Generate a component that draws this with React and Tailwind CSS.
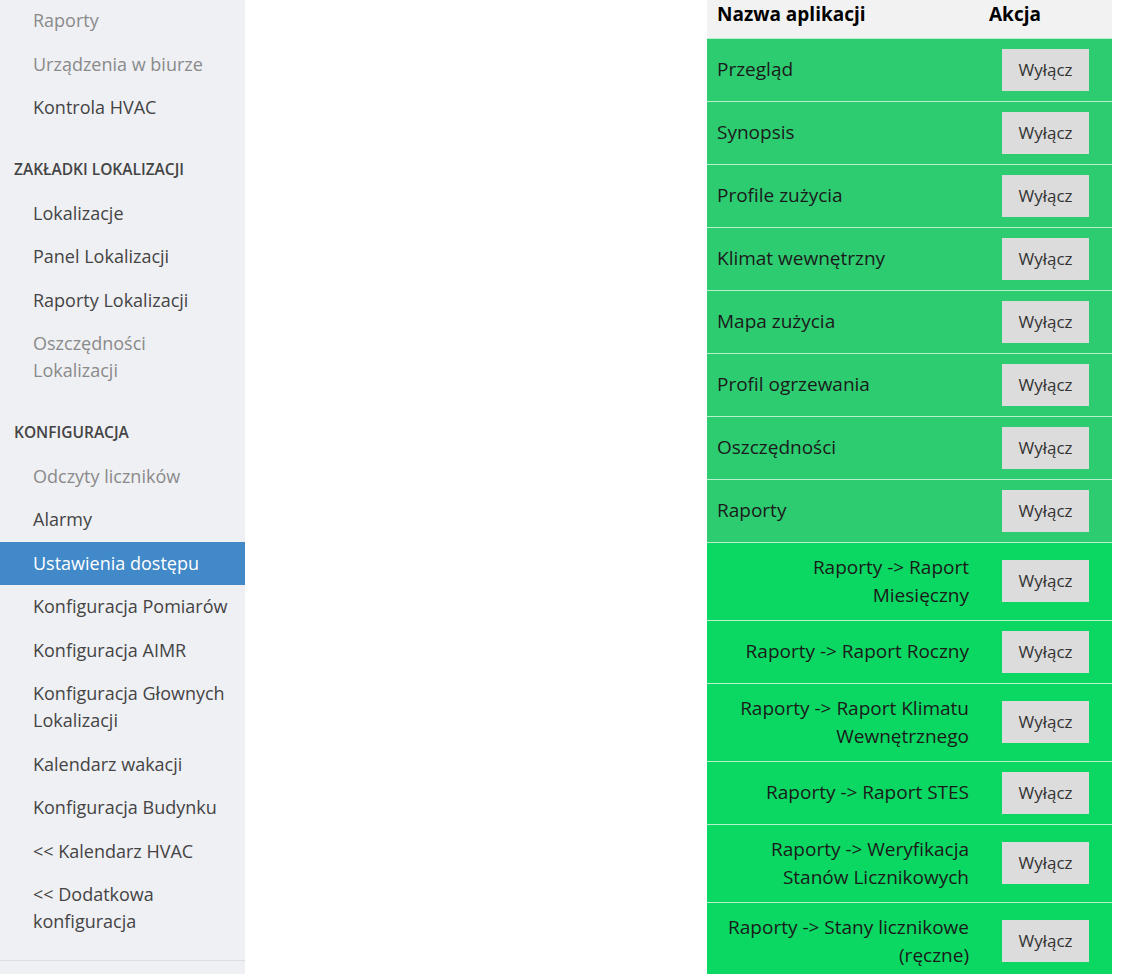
const sections = [
  {
    title: null,
    items: [
      { label: 'Raporty', muted: true },
      { label: 'Urządzenia w biurze', muted: true },
      { label: 'Kontrola HVAC' },
    ],
  },
  {
    title: 'ZAKŁADKI LOKALIZACJI',
    items: [
      { label: 'Lokalizacje' },
      { label: 'Panel Lokalizacji' },
      { label: 'Raporty Lokalizacji' },
      { label: 'Oszczędności Lokalizacji', muted: true },
    ],
  },
  {
    title: 'KONFIGURACJA',
    items: [
      { label: 'Odczyty liczników', muted: true },
      { label: 'Alarmy' },
      { label: 'Ustawienia dostępu', active: true },
      { label: 'Konfiguracja Pomiarów' },
      { label: 'Konfiguracja AIMR' },
      { label: 'Konfiguracja Głownych Lokalizacji' },
      { label: 'Kalendarz wakacji' },
      { label: 'Konfiguracja Budynku' },
      { label: '<< Kalendarz HVAC' },
      { label: '<< Dodatkowa konfiguracja' },
    ],
  },
];

const apps = [
  { name: 'Przegląd' },
  { name: 'Synopsis' },
  { name: 'Profile zużycia' },
  { name: 'Klimat wewnętrzny' },
  { name: 'Mapa zużycia' },
  { name: 'Profil ogrzewania' },
  { name: 'Oszczędności' },
  { name: 'Raporty' },
  { name: 'Raporty -> Raport Miesięczny', sub: true },
  { name: 'Raporty -> Raport Roczny', sub: true },
  { name: 'Raporty -> Raport Klimatu Wewnętrznego', sub: true },
  { name: 'Raporty -> Raport STES', sub: true },
  { name: 'Raporty -> Weryfikacja Stanów Licznikowych', sub: true },
  { name: 'Raporty -> Stany licznikowe (ręczne)', sub: true },
];

function Sidebar() {
  return (
    <aside className="w-[245px] shrink-0 bg-[#eff0f4] min-h-[1100px]">
      <div className="-mt-[1px]">
        {sections.map((section, i) => (
          <div key={i}>
            {section.title && (
              <div className="pl-[14px] pt-[29px] pb-[13px] text-[15.5px] leading-[20px] font-semibold text-[#444]">
                {section.title}
              </div>
            )}
            {section.items.map((item) => (
              <div
                key={item.label}
                className={
                  'pl-[33px] pr-4 py-[8.25px] text-[18px] leading-[27px] ' +
                  (item.active
                    ? 'bg-[#4189c9] text-white'
                    : item.muted
                    ? 'text-[#8a8a8a]'
                    : 'text-[#444]')
                }
              >
                {item.label}
              </div>
            ))}
          </div>
        ))}
        <div className="mt-[16px] border-t border-[#dcdde1]" />
      </div>
    </aside>
  );
}

function AppTable() {
  return (
    <table className="w-[405px] border-collapse text-[19px] leading-[28.5px]">
      <thead>
        <tr className="bg-[#f2f2f2]">
          <th className="h-[38px] pl-[10px] pb-[9px] text-left font-bold text-black">
            Nazwa aplikacji
          </th>
          <th className="h-[38px] pl-[10px] pb-[9px] text-left font-bold text-black">
            Akcja
          </th>
        </tr>
      </thead>
      <tbody>
        {apps.map((app) => (
          <tr
            key={app.name}
            className={
              'border-t border-[#b8f0cc] ' +
              (app.sub ? 'bg-[#0bd862]' : 'bg-[#2ecc71]')
            }
          >
            <td
              className={
                'py-[10px] pl-[10px] pr-[10px] text-[#1a1a1a] ' +
                (app.sub ? 'text-right' : 'text-left')
              }
            >
              {app.name}
            </td>
            <td className="w-[133px] py-[10px] text-center align-middle">
              <button className="h-[42px] w-[87px] bg-[#dcdcdc] text-[17px] leading-[42px] text-[#333]">
                Wyłącz
              </button>
            </td>
          </tr>
        ))}
      </tbody>
    </table>
  );
}

export default function App() {
  return (
    <div
      className="flex h-[974px] overflow-hidden bg-white"
      style={{ fontFamily: '"Open Sans", "Noto Sans", sans-serif' }}
    >
      <Sidebar />
      <main className="flex flex-1 justify-end pr-[25px]">
        <div>
          <AppTable />
        </div>
      </main>
    </div>
  );
}
